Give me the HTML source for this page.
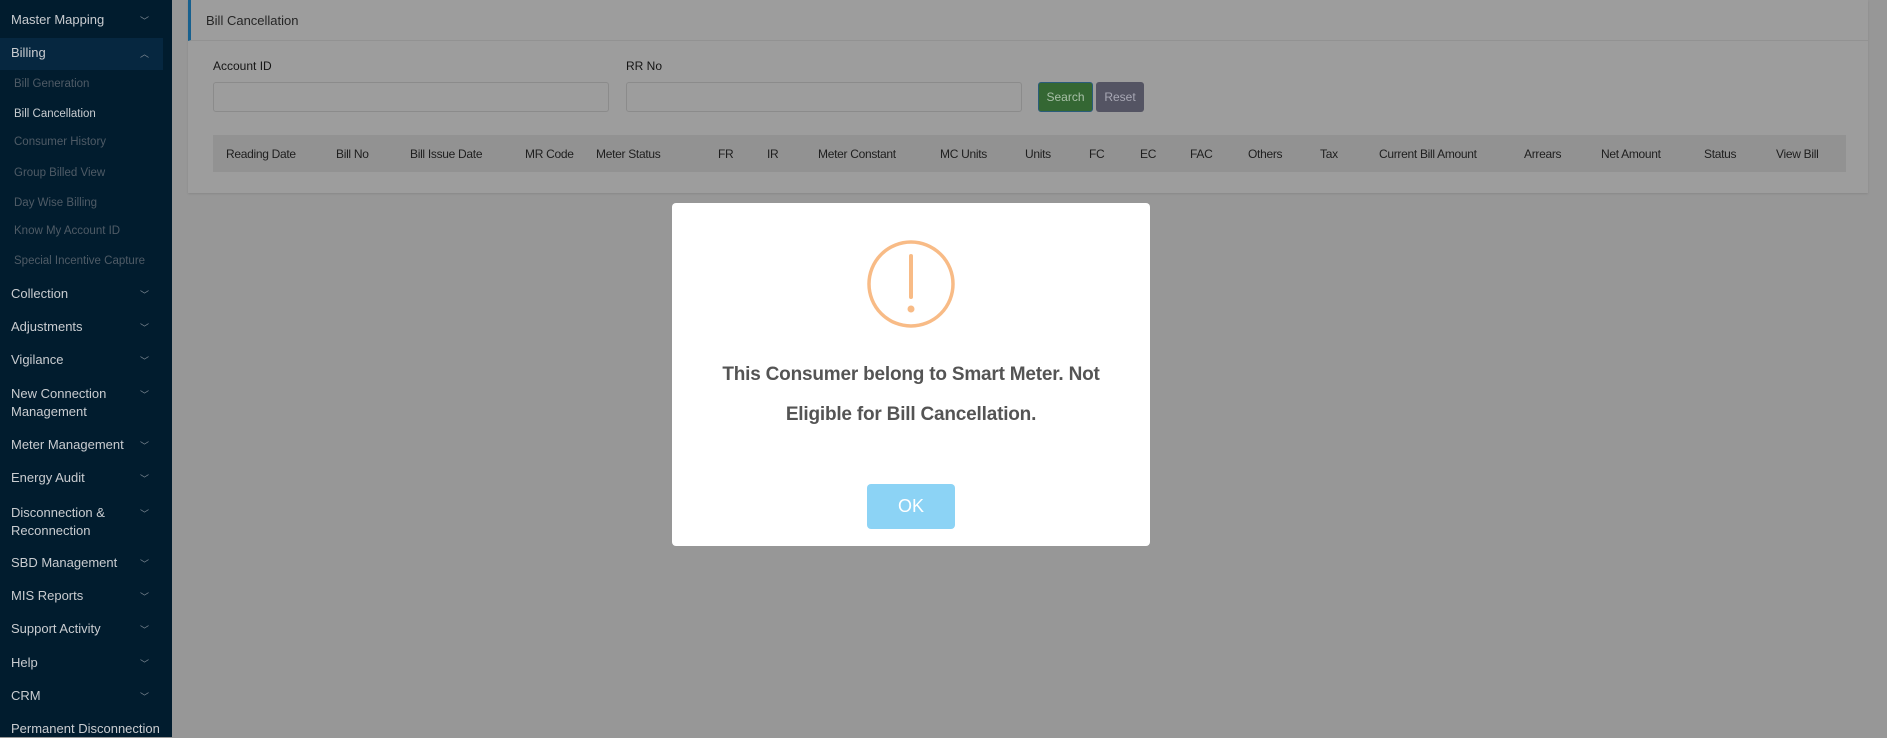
<!DOCTYPE html>
<html><head><meta charset="utf-8"><style>
*{box-sizing:border-box;margin:0;padding:0}
body{width:1887px;height:737px;overflow:hidden;background:#979797;font-family:"Liberation Sans",sans-serif;position:relative}
.sb{position:absolute;left:0;top:0;width:172px;height:737px;background:#011c2e}
.it{position:absolute;left:11px;color:#c9ccd0;font-size:13px;line-height:18px}
.sub{position:absolute;left:14px;color:#4f5b66;font-size:11.5px}
.ch{position:absolute;left:140px;color:#7d8893;font-size:9px}
.card{position:absolute;left:188px;top:0;width:1680px;height:193px;background:#9d9d9d;box-shadow:0 1px 2px rgba(0,0,0,.1)}
.hd{height:41px;border-bottom:1px solid #929292;border-left:3px solid #17608e;padding-left:15px;line-height:41px;font-size:13px;color:#262626}
.lbl{position:absolute;top:59px;font-size:12px;color:#151515}
.inp{position:absolute;top:82px;height:30px;width:396px;border:1px solid #8b8b8b;border-radius:3px;background:#9d9d9d}
.th{position:absolute;left:25px;top:135px;width:1633px;height:37px;background:#929292;font-size:12px;color:#1e1e1e}
.th span{position:absolute;top:12px;letter-spacing:-0.3px}
.modal{position:absolute;left:672px;top:203px;width:478px;height:343px;background:#fff;border-radius:4px}
.msg{position:absolute;left:0;top:152px;width:478px;text-align:center;font-size:19px;font-weight:bold;color:#545454;line-height:40px;letter-spacing:-0.2px}
.ok{position:absolute;left:195px;top:281px;width:88px;height:45px;background:#8cd3f5;border-radius:4px;color:#fff;font-size:18px;text-align:center;line-height:45px}
</style></head><body>
<div class="sb">
<div style="position:absolute;left:0;top:38px;width:163px;height:32px;background:#062740"></div>
<div class="it" style="top:11px">Master Mapping</div><div class="ch" style="top:14px">﹀</div>
<div class="it" style="top:44px">Billing</div><div class="ch" style="top:47px">︿</div>
<div class="sub" style="top:78px">Bill Generation</div>
<div class="sub" style="top:108px;color:#c8ccd0">Bill Cancellation</div>
<div class="sub" style="top:136px">Consumer History</div>
<div class="sub" style="top:167px">Group Billed View</div>
<div class="sub" style="top:197px">Day Wise Billing</div>
<div class="sub" style="top:225px">Know My Account ID</div>
<div class="sub" style="top:255px">Special Incentive Capture</div>
<div class="it" style="top:285px">Collection</div><div class="ch" style="top:288px">﹀</div>
<div class="it" style="top:318px">Adjustments</div><div class="ch" style="top:321px">﹀</div>
<div class="it" style="top:351px">Vigilance</div><div class="ch" style="top:354px">﹀</div>
<div class="it" style="top:385px">New Connection<br>Management</div><div class="ch" style="top:388px">﹀</div>
<div class="it" style="top:436px">Meter Management</div><div class="ch" style="top:439px">﹀</div>
<div class="it" style="top:469px">Energy Audit</div><div class="ch" style="top:472px">﹀</div>
<div class="it" style="top:504px">Disconnection &amp;<br>Reconnection</div><div class="ch" style="top:507px">﹀</div>
<div class="it" style="top:554px">SBD Management</div><div class="ch" style="top:557px">﹀</div>
<div class="it" style="top:587px">MIS Reports</div><div class="ch" style="top:590px">﹀</div>
<div class="it" style="top:620px">Support Activity</div><div class="ch" style="top:623px">﹀</div>
<div class="it" style="top:654px">Help</div><div class="ch" style="top:657px">﹀</div>
<div class="it" style="top:687px">CRM</div><div class="ch" style="top:690px">﹀</div>
<div class="it" style="top:720px">Permanent Disconnection</div>
</div>
<div class="card">
<div class="hd">Bill Cancellation</div>
<div class="lbl" style="left:25px">Account ID</div>
<div class="lbl" style="left:438px">RR No</div>
<div class="inp" style="left:25px"></div>
<div class="inp" style="left:438px"></div>
<div style="position:absolute;left:850px;top:82px;width:55px;height:30px;background:#346733;border:1px solid #2a5c7a;border-radius:3px;color:#a8c0a8;font-size:12px;text-align:center;line-height:28px">Search</div>
<div style="position:absolute;left:908px;top:82px;width:48px;height:30px;background:#545463;border-radius:3px;color:#a8a8b4;font-size:12px;text-align:center;line-height:30px">Reset</div>
<div class="th">
<span style="left:13px">Reading Date</span><span style="left:123px">Bill No</span><span style="left:197px">Bill Issue Date</span><span style="left:312px">MR Code</span><span style="left:383px">Meter Status</span><span style="left:505px">FR</span><span style="left:554px">IR</span><span style="left:605px">Meter Constant</span><span style="left:727px">MC Units</span><span style="left:812px">Units</span><span style="left:876px">FC</span><span style="left:927px">EC</span><span style="left:977px">FAC</span><span style="left:1035px">Others</span><span style="left:1107px">Tax</span><span style="left:1166px">Current Bill Amount</span><span style="left:1311px">Arrears</span><span style="left:1388px">Net Amount</span><span style="left:1491px">Status</span><span style="left:1563px">View Bill</span>
</div>
</div>
<div class="modal">
<svg style="position:absolute;left:194px;top:36px" width="90" height="90" viewBox="0 0 90 90"><circle cx="45" cy="45" r="42" fill="none" stroke="#f8bb86" stroke-width="3.5"/><line x1="45" y1="17" x2="45" y2="58" stroke="#f8bb86" stroke-width="4" stroke-linecap="round"/><circle cx="45" cy="70" r="3.5" fill="#f8bb86"/></svg>
<div class="msg">This Consumer belong to Smart Meter. Not<br>Eligible for Bill Cancellation.</div>
<div class="ok">OK</div>
</div>
</body></html>
